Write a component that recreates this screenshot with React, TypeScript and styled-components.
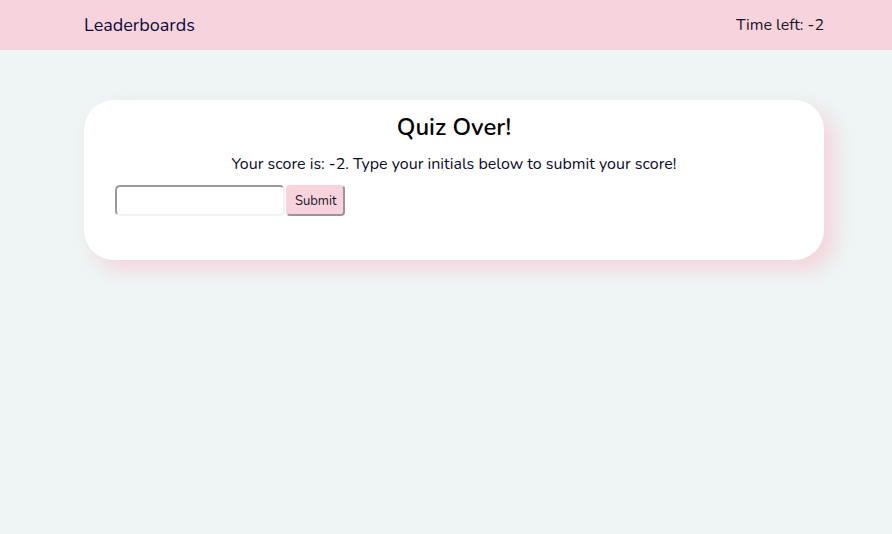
import React from "react";
import styled, { createGlobalStyle } from "styled-components";

const Global = createGlobalStyle`
  html, body { margin: 0; padding: 0; }
  body {
    background: #eef5f4;
    font-family: "Nunito", "Lato", "Noto Sans", sans-serif;
    color: #0b0b2a;
    min-height: 534px;
  }
`;

const Header = styled.header`
  height: 50px;
  background: #f7d4dd;
  display: flex;
  align-items: center;
  justify-content: space-between;
  padding: 0 68px 0 84px;
`;

const HeaderLink = styled.span`
  color: #0b0b3a;
  font-size: 18px;
`;

const Timer = styled.span`
  color: #1a1426;
  font-size: 16px;
`;

const Main = styled.main`
  padding: 50px 68px 0 84px;
`;

const Card = styled.section`
  background: #ffffff;
  border-radius: 30px;
  box-shadow: 10px 10px 20px rgba(245, 200, 212, 0.75);
  padding: 11px 31px 44px;
  display: flex;
  flex-direction: column;
`;

const Title = styled.h2`
  margin: 0;
  text-align: center;
  font-size: 24px;
  font-weight: 600;
  color: #000;
  line-height: 32px;
`;

const Message = styled.p`
  margin: 10px 0 10px;
  text-align: center;
  font-size: 16px;
  line-height: 22px;
  color: #0b0b2a;
`;

const Form = styled.form`
  display: flex;
  align-items: stretch;
`;

const Input = styled.input`
  width: 170px;
  height: 31px;
  box-sizing: border-box;
  border-style: solid;
  border-width: 2px;
  border-color: #9a9a9a #eef3f2 #eef3f2 #9a9a9a;
  border-radius: 5px;
  background: #fff;
  margin: 0;
`;

const Button = styled.button`
  height: 31px;
  box-sizing: border-box;
  padding: 0 6px 0 7px;
  margin-left: 1px;
  background: #f7d4dd;
  border-style: solid;
  border-width: 2px;
  border-color: #f7d4dd #a0929a #a0929a #f7d4dd;
  border-radius: 4px;
  font-family: "Nunito", "Lato", "Noto Sans", sans-serif;
  font-size: 13px;
  color: #1a1426;
`;

export default function App() {
  return (
    <>
      <Global />
      <Header>
        <HeaderLink>Leaderboards</HeaderLink>
        <Timer>Time left: -2</Timer>
      </Header>
      <Main>
        <Card>
          <Title>Quiz Over!</Title>
          <Message>Your score is: -2. Type your initials below to submit your score!</Message>
          <Form onSubmit={(e) => e.preventDefault()}>
            <Input type="text" />
            <Button type="submit">Submit</Button>
          </Form>
        </Card>
      </Main>
    </>
  );
}
